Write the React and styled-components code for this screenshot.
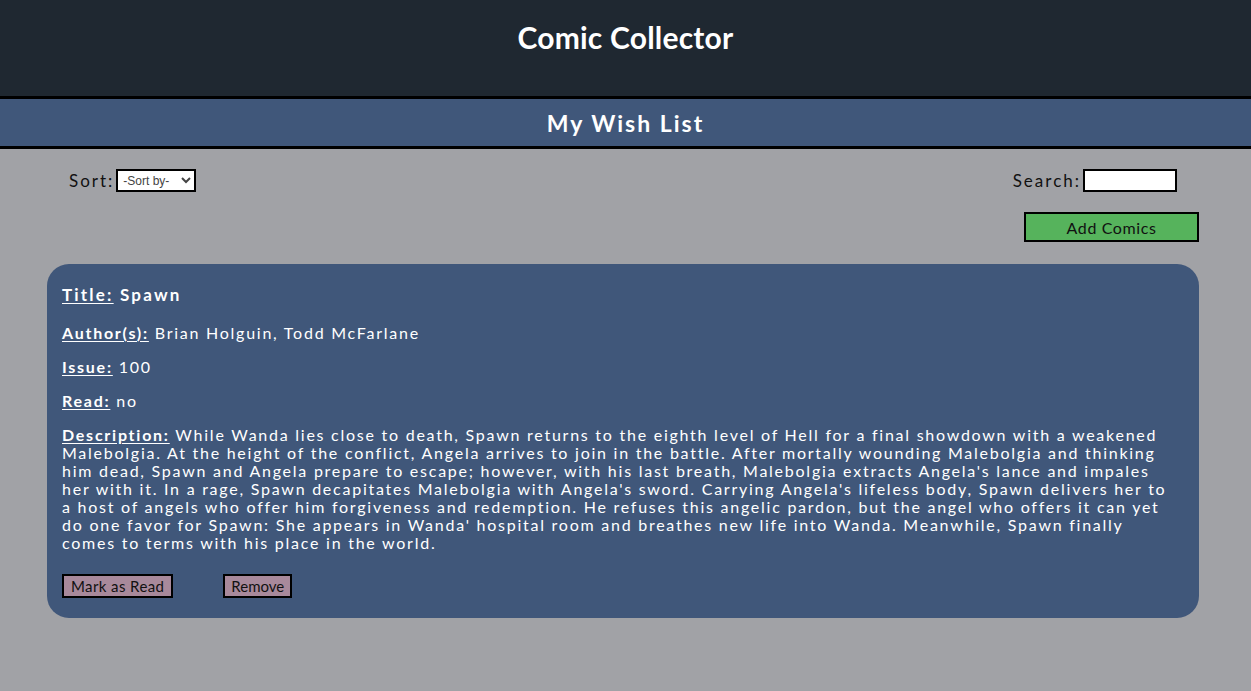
import styled, { createGlobalStyle } from 'styled-components'

const GlobalStyle = createGlobalStyle`
  html, body {
    margin: 0;
    padding: 0;
    background: #a1a2a6;
    font-family: Lato, "Open Sans", sans-serif;
  }
`

const Header = styled.header`
  background: #1f2831;
  height: 96px;
  display: flex;
  justify-content: center;
  border-bottom: 3px solid #000;
`
const H1 = styled.h1`
  margin: 19px 0 0;
  color: #fff;
  font-size: 30px;
  font-weight: 700;
  letter-spacing: 0.2px;
  line-height: 36px;
`
const Band = styled.div`
  background: #40577a;
  height: 47px;
  display: flex;
  align-items: center;
  justify-content: center;
  border-bottom: 3px solid #000;
`
const H2 = styled.h2`
  margin: 0;
  color: #fff;
  font-size: 23px;
  font-weight: 700;
  letter-spacing: 2px;
`
const Main = styled.main`
  padding: 20px 52px 0 47px;
`
const Toolbar = styled.div`
  display: flex;
  justify-content: space-between;
  align-items: center;
  padding: 0 22px 0 22px;
`
const Field = styled.label`
  display: flex;
  align-items: center;
  font-size: 17px;
  letter-spacing: 2px;
  color: #111;
`
const Select = styled.select`
  font-family: "Liberation Sans", Arial, sans-serif;
  font-size: 12px;
  letter-spacing: 0;
  color: #444;
  border: 2px solid #000;
  border-radius: 0;
  background: #fff;
  height: 23px;
  width: 80px;
  padding: 0 1px;
  margin-left: 2px;
`
const Input = styled.input`
  border: 2px solid #000;
  border-radius: 0;
  height: 23px;
  width: 94px;
  box-sizing: border-box;
  margin-left: 2px;
  padding: 0 2px;
`
const AddRow = styled.div`
  display: flex;
  justify-content: flex-end;
  margin-top: 20px;
`
const AddButton = styled.button`
  width: 175px;
  height: 30px;
  background: #56b35c;
  border: 2px solid #000;
  font-family: Lato, sans-serif;
  font-size: 16px;
  letter-spacing: 0.6px;
  color: #111;
  cursor: pointer;
`
const Card = styled.section`
  margin-top: 22px;
  background: #40577a;
  border-radius: 22px;
  padding: 22px 15px 20px;
  color: #fff;
  letter-spacing: 1.75px;
  font-size: 16px;
`
const Line = styled.p`
  margin: 0 0 16px;
  line-height: 18px;
  font-size: ${p => (p.$big ? '17px' : '16px')};
  font-weight: ${p => (p.$big ? 700 : 400)};
  letter-spacing: ${p => (p.$big ? '2.2px' : 'inherit')};
  margin-top: ${p => (p.$gap ? `${p.$gap}px` : '0')};
`
const Label = styled.span`
  font-weight: 700;
  text-decoration: underline;
  text-underline-offset: 2px;
`
const Actions = styled.div`
  display: flex;
  gap: 50px;
  margin-top: 22px;
`
const SmallButton = styled.button`
  background: #a8899b;
  border: 2px solid #000;
  height: 24px;
  padding: 0 ${p => (p.$tight ? 6 : 7)}px;
  font-family: Lato, sans-serif;
  font-size: 15px;
  letter-spacing: ${p => (p.$tight ? 0 : 0.4)}px;
  color: #111;
  cursor: pointer;
`

const descriptionLines = [
  'While Wanda lies close to death, Spawn returns to the eighth level of Hell for a final showdown with a weakened',
  'Malebolgia. At the height of the conflict, Angela arrives to join in the battle. After mortally wounding Malebolgia and thinking',
  "him dead, Spawn and Angela prepare to escape; however, with his last breath, Malebolgia extracts Angela's lance and impales",
  "her with it. In a rage, Spawn decapitates Malebolgia with Angela's sword. Carrying Angela's lifeless body, Spawn delivers her to",
  'a host of angels who offer him forgiveness and redemption. He refuses this angelic pardon, but the angel who offers it can yet',
  "do one favor for Spawn: She appears in Wanda' hospital room and breathes new life into Wanda. Meanwhile, Spawn finally",
  'comes to terms with his place in the world.',
]

const App = () => (
  <>
    <GlobalStyle />
    <Header>
      <H1>Comic Collector</H1>
    </Header>
    <Band>
      <H2>My Wish List</H2>
    </Band>
    <Main>
      <Toolbar>
        <Field>
          Sort:
          <Select defaultValue="">
            <option value="">-Sort by-</option>
            <option>Title</option>
            <option>Author</option>
          </Select>
        </Field>
        <Field>
          Search:
          <Input type="text" />
        </Field>
      </Toolbar>
      <AddRow>
        <AddButton>Add Comics</AddButton>
      </AddRow>
      <Card>
        <Line $big>
          <Label>Title:</Label> Spawn
        </Line>
        <Line $gap={20}>
          <Label>Author(s):</Label> Brian Holguin, Todd McFarlane
        </Line>
        <Line>
          <Label>Issue:</Label> 100
        </Line>
        <Line>
          <Label>Read:</Label> no
        </Line>
        <Line>
          <Label>Description:</Label>{' '}
          {descriptionLines.map((text, i) => (
            <span key={i}>
              {text}
              {i < descriptionLines.length - 1 && <br />}
            </span>
          ))}
        </Line>
        <Actions>
          <SmallButton>Mark as Read</SmallButton>
          <SmallButton $tight>Remove</SmallButton>
        </Actions>
      </Card>
    </Main>
  </>
)

export default App
